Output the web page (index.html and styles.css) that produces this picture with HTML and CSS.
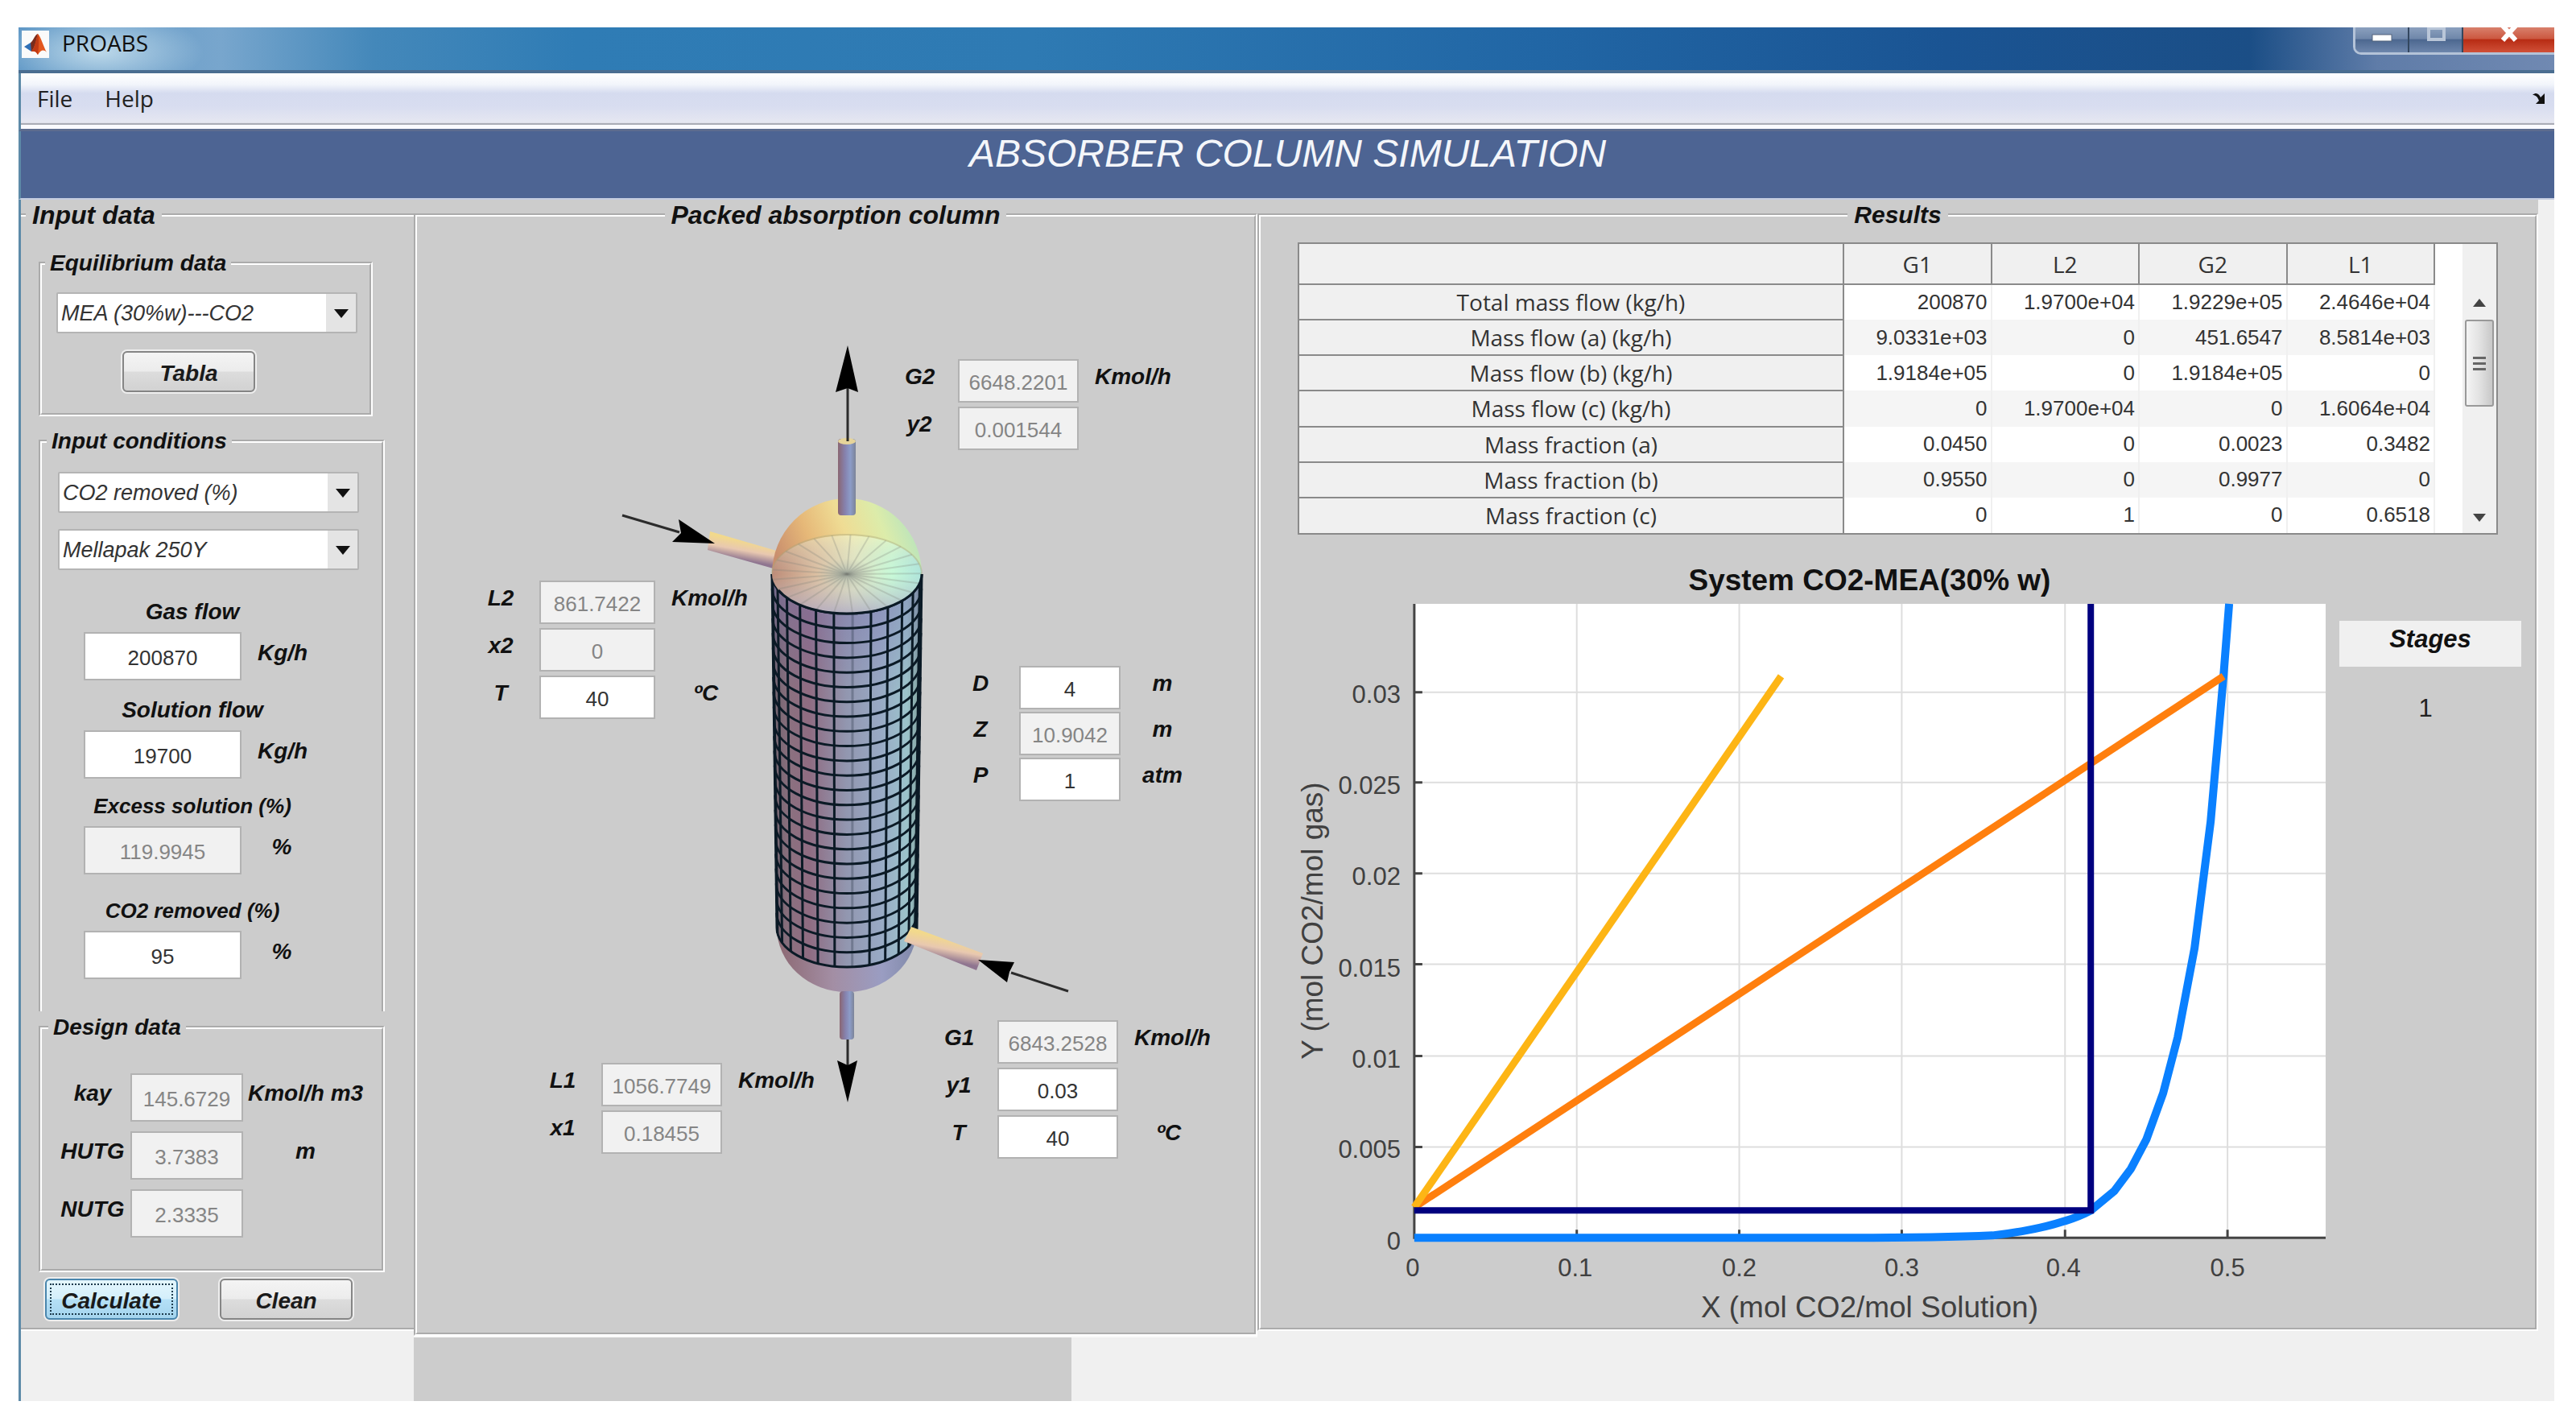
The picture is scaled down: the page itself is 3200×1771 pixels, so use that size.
FILE: index.html
```html
<!DOCTYPE html>
<html lang="en">
<head>
<meta charset="utf-8">
<title>PROABS</title>
<link rel="stylesheet" href="styles.css">
</head>
<body>
<div class="window">
  <header class="titlebar">
    <svg class="app-icon" viewBox="0 0 34 34" aria-hidden="true">
      <rect width="34" height="34" fill="#fafafa"/>
      <path d="M3 20 L11 15 L17 19 L12 26 Z" fill="#2f6fb5"/>
      <path d="M11 15 C14 13 17 4 20 4 L17 19 L12 26 Z" fill="#7a2c1c"/>
      <path d="M20 4 C24 8 27 20 31 27 C27 23 24 24 20 30 C18 26 16 25 12 26 C17 20 18 10 20 4 Z" fill="#e2571e"/>
      <path d="M20 4 C22 12 21 22 20 30 C18 26 16 25 12 26 C17 20 18 10 20 4 Z" fill="#c03a14"/>
    </svg>
    <span class="app-name">PROABS</span>
    <div class="window-buttons">
      <button class="win-btn" aria-label="Minimize"><svg viewBox="0 0 30 34"><rect x="3" y="9" width="24" height="8" fill="#fff" stroke="#55657d"/></svg></button>
      <button class="win-btn" aria-label="Maximize"><svg viewBox="0 0 30 34"><rect x="6" y="1" width="19" height="14" fill="none" stroke="#b9c6d8" stroke-width="4"/></svg></button>
      <button class="win-btn close" aria-label="Close"><svg viewBox="0 0 30 34"><path d="M7 -2 L23 16 M23 -2 L7 16" stroke="#fff" stroke-width="6"/></svg></button>
    </div>
  </header>
  <nav class="menubar">
    <a href="#file">File</a>
    <a href="#help">Help</a>
    <svg class="dock" viewBox="0 0 18 16" aria-hidden="true"><path d="M1 4 C6 0 9 3 11 7 L16 2 V15 H5 L9 11 C7 6 5 4 1 4 Z" fill="#111"/></svg>
  </nav>
  <h1 class="banner">ABSORBER COLUMN SIMULATION</h1>

  <main class="panes">
    <section class="pane pane-input">
      <fieldset class="panel">
        <legend>Input data</legend>

        <fieldset class="group equilibrium">
          <legend>Equilibrium data</legend>
          <span class="dropdown"><select aria-label="Equilibrium system"><option>MEA (30%w)---CO2</option></select></span>
          <button class="btn">Tabla</button>
        </fieldset>

        <fieldset class="group conditions">
          <legend>Input conditions</legend>
          <span class="dropdown"><select aria-label="Specification"><option>CO2 removed (%)</option></select></span>
          <span class="dropdown"><select aria-label="Packing"><option>Mellapak 250Y</option></select></span>
          <div class="fields flows">
            <div class="field"><label for="gas">Gas flow</label><input id="gas" value="200870"><span>Kg/h</span></div>
            <div class="field"><label for="sol">Solution flow</label><input id="sol" value="19700"><span>Kg/h</span></div>
          </div>
          <div class="fields percents">
            <div class="field"><label for="exc">Excess solution (%)</label><input id="exc" value="119.9945" disabled><span>%</span></div>
            <div class="field"><label for="rem">CO2 removed (%)</label><input id="rem" value="95"><span>%</span></div>
          </div>
        </fieldset>

        <fieldset class="group design">
          <legend>Design data</legend>
          <div class="design-grid">
            <label for="kay">kay</label><input id="kay" value="145.6729" disabled><span>Kmol/h m3</span>
            <label for="hutg">HUTG</label><input id="hutg" value="3.7383" disabled><span>m</span>
            <label for="nutg">NUTG</label><input id="nutg" value="2.3335" disabled><span></span>
          </div>
        </fieldset>

        <div class="actions">
          <button class="btn focused">Calculate</button>
          <button class="btn">Clean</button>
        </div>
      </fieldset>
    </section>

    <section class="pane pane-column">
      <fieldset class="panel centered">
        <legend>Packed absorption column</legend>
        <div class="canvas">
          <svg class="column" viewBox="0 0 1040 1371" aria-label="Absorption column">
            <defs>
              <linearGradient id="shell" x1="0" x2="1" y1="0" y2="0">
                <stop offset="0" stop-color="#6d626c"/><stop offset=".12" stop-color="#8b707f"/><stop offset=".25" stop-color="#8f6c82"/>
                <stop offset=".5" stop-color="#9297b0"/><stop offset=".72" stop-color="#98a9c4"/><stop offset=".9" stop-color="#9cc3cb"/><stop offset="1" stop-color="#7f9c98"/>
              </linearGradient>
              <linearGradient id="shellTop" x1="0" x2="0" y1="0" y2="1">
                <stop offset="0" stop-color="#7a72b0" stop-opacity=".5"/><stop offset=".3" stop-color="#7a72b0" stop-opacity="0"/>
              </linearGradient>
              <linearGradient id="dome" x1="0" x2="1" y1=".6" y2=".4">
                <stop offset="0" stop-color="#c98f6e"/><stop offset=".25" stop-color="#e6b878"/><stop offset=".5" stop-color="#efdc94"/>
                <stop offset=".75" stop-color="#dcecaa"/><stop offset="1" stop-color="#b2e2c0"/>
              </linearGradient>
              <linearGradient id="cap" x1="0" x2="1" y1="0" y2="0">
                <stop offset="0" stop-color="#bd8c78"/><stop offset=".3" stop-color="#dcc0a2"/><stop offset=".55" stop-color="#e2e8c4"/>
                <stop offset=".8" stop-color="#c8fad8"/><stop offset="1" stop-color="#aee6dc"/>
              </linearGradient>
              <linearGradient id="capFall" x1="0" x2="0" y1="0" y2="1">
                <stop offset="0" stop-color="#fff4b0" stop-opacity=".45"/><stop offset=".5" stop-color="#c0c0c8" stop-opacity="0"/><stop offset="1" stop-color="#a9a5c6" stop-opacity=".75"/>
              </linearGradient>
              <radialGradient id="capCore">
                <stop offset="0" stop-color="#a4b2aa" stop-opacity=".8"/><stop offset=".4" stop-color="#b4bcb4" stop-opacity="0"/>
              </radialGradient>
              <linearGradient id="base" x1="0" x2="1" y1="0" y2="0">
                <stop offset="0" stop-color="#8c6872"/><stop offset=".4" stop-color="#a38ea4"/><stop offset=".75" stop-color="#9a9dc2"/><stop offset="1" stop-color="#7f88a8"/>
              </linearGradient>
              <linearGradient id="pipe" x1="0" x2="1" y1="0" y2="0">
                <stop offset="0" stop-color="#8a6672"/><stop offset=".4" stop-color="#8682ae"/><stop offset=".7" stop-color="#8c9cc8"/><stop offset="1" stop-color="#7c8498"/>
              </linearGradient>
              <linearGradient id="side" x1=".6" x2=".4" y1=".2" y2=".8">
                <stop offset=".1" stop-color="#f2d98c"/><stop offset=".5" stop-color="#e8c8b0"/><stop offset=".9" stop-color="#8f7590"/>
              </linearGradient>
            </defs>
            <path d="M364 377 L450 402 L446 424 L361 400 Z" fill="url(#side)"/>
            <path d="M447 869 A87 80 0 0 0 621 869 Z" fill="url(#base)"/>
            <path d="M441 430 L447 869 A87 48 0 0 0 621 869 L627 430 Z" fill="url(#shell)"/>
            <path d="M441 430 L447 869 A87 48 0 0 0 621 869 L627 430 Z" fill="url(#shellTop)"/>
            <path d="M441 430 A93 94 0 0 1 627 430 Z" fill="url(#dome)"/>
            <g id="mesh" fill="none" stroke="#0b1a26" stroke-width="3"></g>
            <ellipse cx="534" cy="430" rx="93" ry="48" fill="url(#cap)"/>
            <ellipse cx="534" cy="430" rx="93" ry="48" fill="url(#capFall)"/>
            <ellipse cx="534" cy="430" rx="93" ry="48" fill="url(#capCore)"/>
            <g id="rays" stroke="#7d8078" stroke-opacity=".26" stroke-width="2"></g>
            <path d="M441 430 A93 49 0 0 1 627 430" fill="none" stroke="#a8a47c" stroke-opacity=".4" stroke-width="2"/>
            <path d="M441 430 A93 49 0 0 0 627 430" fill="none" stroke="#0b1a26" stroke-width="3" stroke-dasharray="0 22 222 22"/>
            <rect x="523" y="262" width="22" height="95" rx="4" fill="url(#pipe)"/>
            <ellipse cx="534" cy="265" rx="11" ry="4" fill="#e6d49a"/>
            <rect x="525" y="948" width="18" height="60" rx="4" fill="url(#pipe)"/>
            <path d="M614 868 L703 901 L695 922 L605 886 Z" fill="url(#side)"/>
            <g stroke="#2b2b2b" stroke-width="3">
              <path d="M535 265 V198"/><path d="M255 357 L326 378"/><path d="M809 948 L738 925"/><path d="M535 1008 V1040"/>
            </g>
            <g fill="#000">
              <path d="M535 146 L548 204 L535 199 L520 204 Z"/>
              <path d="M370 392 L325 362 L328 379 L317 390 Z"/>
              <path d="M697 909 L742 912 L736 924 L733 937 Z"/>
              <path d="M535 1086 L522 1034 L535 1040 L547 1034 Z"/>
            </g>
          </svg>

          <div class="stream at-g2">
            <label for="g2">G2</label><input id="g2" value="6648.2201" disabled><span>Kmol/h</span>
            <label for="y2">y2</label><input id="y2" value="0.001544" disabled><span></span>
          </div>
          <div class="stream narrow at-l2">
            <label for="l2">L2</label><input id="l2" value="861.7422" disabled><span>Kmol/h</span>
            <label for="x2">x2</label><input id="x2" value="0" disabled><span></span>
            <label for="t2">T</label><input id="t2" value="40"><span>ºC</span>
          </div>
          <div class="stream sizing at-size">
            <label for="d">D</label><input id="d" value="4"><span>m</span>
            <label for="z">Z</label><input id="z" value="10.9042" disabled><span>m</span>
            <label for="p">P</label><input id="p" value="1"><span>atm</span>
          </div>
          <div class="stream at-g1">
            <label for="g1">G1</label><input id="g1" value="6843.2528" disabled><span>Kmol/h</span>
            <label for="y1">y1</label><input id="y1" value="0.03"><span></span>
            <label for="t1">T</label><input id="t1" value="40"><span>ºC</span>
          </div>
          <div class="stream at-l1">
            <label for="l1">L1</label><input id="l1" value="1056.7749" disabled><span>Kmol/h</span>
            <label for="x1">x1</label><input id="x1" value="0.18455" disabled><span></span>
          </div>
        </div>
      </fieldset>
    </section>

    <section class="pane pane-results">
      <fieldset class="panel centered">
        <legend>Results</legend>
        <div class="table-box">
          <table>
            <thead><tr><th class="name"></th><th>G1</th><th>L2</th><th>G2</th><th>L1</th></tr></thead>
            <tbody>
              <tr><th>Total mass flow (kg/h)</th><td>200870</td><td>1.9700e+04</td><td>1.9229e+05</td><td>2.4646e+04</td></tr>
              <tr><th>Mass flow (a) (kg/h)</th><td>9.0331e+03</td><td>0</td><td>451.6547</td><td>8.5814e+03</td></tr>
              <tr><th>Mass flow (b) (kg/h)</th><td>1.9184e+05</td><td>0</td><td>1.9184e+05</td><td>0</td></tr>
              <tr><th>Mass flow (c) (kg/h)</th><td>0</td><td>1.9700e+04</td><td>0</td><td>1.6064e+04</td></tr>
              <tr><th>Mass fraction (a)</th><td>0.0450</td><td>0</td><td>0.0023</td><td>0.3482</td></tr>
              <tr><th>Mass fraction (b)</th><td>0.9550</td><td>0</td><td>0.9977</td><td>0</td></tr>
              <tr><th>Mass fraction (c)</th><td>0</td><td>1</td><td>0</td><td>0.6518</td></tr>
            </tbody>
          </table>
          <div class="scrollbar" aria-hidden="true">
            <svg class="arrow" viewBox="0 0 16 10"><path d="M0 10 L8 0 L16 10 Z" fill="#444"/></svg>
            <div class="thumb"><i></i><i></i><i></i></div>
            <svg class="arrow" viewBox="0 0 16 10"><path d="M0 0 L8 10 L16 0 Z" fill="#444"/></svg>
          </div>
        </div>

        <div class="plot-row">
          <svg class="plot" viewBox="0 0 1280 960" aria-label="System CO2-MEA(30% w)">
            <rect x="146" y="60" width="1133" height="788" fill="#fff"/>
            <path class="grid" d="M348 60V848 M550 60V848 M752 60V848 M955 60V848 M1157 60V848 M146 170H1279 M146 282H1279 M146 395H1279 M146 508H1279 M146 622H1279 M146 735H1279"/>
            <path class="axis" d="M146 60V848H1279 M348 848V838 M550 848V838 M752 848V838 M955 848V838 M1157 848V838 M146 170H156 M146 282H156 M146 395H156 M146 508H156 M146 622H156 M146 735H156"/>
            <path class="line equilibrium-line" d="M146 848 H689 Q800 848 865 845 Q918 839 955 827 Q972 822 987 814 L1016 790 L1037 762 L1056 726 L1077 668 L1095 599 L1116 488 L1136 331 L1152 150 L1159 60"/>
            <path class="line minimum-line" d="M146 810 L1152 150"/>
            <path class="line operating-line" d="M146 810 L602 150"/>
            <path class="line stage-line" d="M146 814 H987 V60"/>
            <text class="plot-title" x="712" y="43">System CO2-MEA(30% w)</text>
            <g class="ticks-y">
              <text x="129" y="183">0.03</text><text x="129" y="296">0.025</text><text x="129" y="409">0.02</text><text x="129" y="523">0.015</text>
              <text x="129" y="636">0.01</text><text x="129" y="749">0.005</text><text x="129" y="863">0</text>
            </g>
            <g class="ticks-x">
              <text x="144" y="896">0</text><text x="346" y="896">0.1</text><text x="550" y="896">0.2</text><text x="752" y="896">0.3</text>
              <text x="953" y="896">0.4</text><text x="1157" y="896">0.5</text>
            </g>
            <text class="axis-name" x="712" y="947">X (mol CO2/mol Solution)</text>
            <text class="axis-name" transform="translate(32 454) rotate(-90)">Y (mol CO2/mol gas)</text>
          </svg>
          <div class="stages">
            <h2>Stages</h2>
            <output>1</output>
          </div>
        </div>
      </fieldset>
    </section>
  </main>
  <footer class="status"><div class="status-block"></div></footer>
</div>
<script src="column.js"></script>
</body>
</html>
```
FILE: styles.css
```css
* { box-sizing: border-box; }

body {
  margin: 34px 27px 28px 23px;
  background: #fff;
  color: #111;
  font-family: "Liberation Sans", Arial, sans-serif;
}

button, input, select { font-family: inherit; margin: 0; }

/* Title bar */
.titlebar {
  display: flex;
  height: 57px;
  padding-left: 4px;
  border-bottom: 4px solid #4a6d90;
  background:
    radial-gradient(ellipse 130px 50px at 100px 30px, rgba(205, 228, 240, .85), rgba(205, 228, 240, 0)),
    linear-gradient(90deg, #5a94c4 0, #78a6cd 8%, #4488ba 14%, #2f7cb5 22%, #2e7ab3 40%, #2166a5 60%, #1a5493 76%, #1b4e86 88%, #5f7ca8 93%, #7089b2 100%);
}
.app-icon { width: 34px; height: 34px; margin-top: 4px; }
.app-name {
  margin-left: 16px;
  font: 28px/38px "Open Sans", "Noto Sans", sans-serif;
}
.window-buttons {
  display: flex;
  height: 34px;
  margin-left: auto;
  border: 3px solid #b4c3d8;
  border-width: 0 0 3px 3px;
  border-radius: 0 0 0 10px;
  overflow: hidden;
}
.win-btn {
  width: 67px;
  padding: 0;
  border: 0;
  border-right: 2px solid #33475f;
  background: linear-gradient(#8ba0be, #6f87aa 45%, #4d6890 50%, #6d86ac);
}
.win-btn svg { display: block; height: 34px; margin: 0 auto; }
.win-btn.close { width: 113px; border-right: 0; background: linear-gradient(#d8806c, #cc5840 45%, #b82c14 50%, #d05038); }

/* Menu bar and banner */
.menubar {
  display: flex;
  align-items: center;
  gap: 40px;
  height: 72px;
  padding: 0 10px 8px 20px;
  border-left: 3px solid #5d8aa8;
  border-bottom: 3px solid #5d6c8e;
  background: linear-gradient(#fff 0, #f2f5fb 20%, #d5dbef 36%, #d8ddf0 60%, #e6e7f1 89%, #a9abb5 90%, #a9abb5 92%, #fafaff 93%);
  font: 28px/40px "Open Sans", "Noto Sans", sans-serif;
}
.menubar a { color: #222; text-decoration: none; }
.dock { width: 18px; height: 16px; margin-left: auto; }

.banner {
  height: 85px;
  margin: 0;
  border-left: 3px solid #5d8aa8;
  border-bottom: 2px solid #c4cce0;
  background: #4d6493;
  color: #f4f6fa;
  font-size: 48px;
  font-weight: 400;
  font-style: italic;
  line-height: 56px;
  text-align: center;
}

/* Three panes */
.panes, .status {
  display: grid;
  grid-template-columns: 488fr 1048fr 1591fr 20px;
  border-left: 3px solid #5d8aa8;
  background: #f0f0f0;
}
.pane { display: flex; padding-top: 3px; background: #ccc; }
.pane-input, .pane-results { margin-bottom: 8px; }
.pane-column { border-bottom: 2px solid #fafafa; }
.status { height: 79px; }
.status-block { grid-column: 2; width: 78%; background: #ccc; }

fieldset { min-width: 0; margin: 0; padding: 0; border: 4px groove #fff; }
legend, label, .field span, .stream span, .design-grid span, .btn {
  font-size: 28px;
  font-weight: 700;
  font-style: italic;
}
.panel { flex: 1; }
.panel > legend { padding: 0 8px; font-size: 32px; line-height: 32px; }
.pane-input .panel { border-left: 0; border-right: 0; padding-left: 22px; }
.pane-input .panel > legend { margin-left: -16px; }
.centered > legend { margin: 0 auto; }
.pane-results .panel > legend { font-size: 30px; }

/* Input groups */
.group > legend { margin-left: -14px; padding: 0 6px; line-height: 32px; }
.equilibrium { width: 415px; margin-top: 28px; padding: 0 18px 26px; }
.equilibrium .btn { display: block; margin: 22px 0 0 82px; }
.conditions { width: 430px; margin-top: 15px; padding: 0 20px 40px 20px; border-bottom: 0; }
.design { width: 430px; margin-top: 4px; padding: 0 0 39px 22px; }

.dropdown { position: relative; display: block; width: 374px; margin-top: 20px; }
.conditions .dropdown:first-of-type { margin-top: 22px; }
.dropdown::after {
  content: "";
  position: absolute;
  top: 21px;
  right: 11px;
  border: 9px solid transparent;
  border-top: 11px solid #111;
  border-bottom: 0;
  pointer-events: none;
}
select {
  width: 100%;
  height: 51px;
  padding: 0 40px 0 4px;
  border: 2px solid #b4b4b4;
  border-radius: 2px;
  appearance: none;
  background: linear-gradient(#e4e4e4, #e4e4e4) right / 37px 100% no-repeat #fff;
  color: #333;
  font-size: 27px;
  font-style: italic;
}

input {
  width: 100%;
  height: 54px;
  padding: 4px 0 0;
  border: 2px solid #b2b2b2;
  border-radius: 0;
  background: #fff;
  color: #333;
  font-size: 26px;
  text-align: center;
}
input:disabled { background: #f1f1f1; color: #858585; }
label, .field span, .stream span, .design-grid span { text-align: center; white-space: nowrap; }

.fields { display: grid; width: 276px; margin-left: 32px; }
.flows { gap: 20px; margin-top: 35px; }
.percents { gap: 28px; margin-top: 17px; }
.field { display: grid; grid-template-columns: 196px 60px; column-gap: 20px; }
.field label { grid-column: 1 / 3; margin-bottom: 8px; padding-right: 6px; line-height: 34px; }
.percents label { font-size: 26px; }
.field input, .design-grid input { height: 60px; }
.field span { line-height: 52px; }

.design-grid {
  display: grid;
  grid-template-columns: 82px 140px 143px;
  gap: 12px 6px;
  margin-top: 41px;
}
.design-grid label, .design-grid span { line-height: 50px; }

.btn {
  width: 165px;
  height: 51px;
  padding: 4px 0 0;
  border: 2px solid #858585;
  border-radius: 6px;
  background: linear-gradient(#f4f4f4, #ececec 48%, #dcdcdc 52%, #d2d2d2);
  box-shadow: 0 0 0 2px #eee;
  color: #1a1a1a;
}
.btn.focused {
  border-color: #4a86ad;
  outline: 2px dotted #1c3a4c;
  outline-offset: -8px;
  background: linear-gradient(#e4f6fd, #d4effb 48%, #b4e0f6 52%, #a4d4ee);
}
.actions { display: flex; gap: 52px; margin: 8px 0 10px 8px; }

/* Column diagram: streams are pinned round the drawing */
.canvas { position: relative; width: 1040px; height: 1371px; margin: 0 auto; }
.column { display: block; width: 100%; height: 100%; }
.stream {
  position: absolute;
  display: grid;
  grid-template-columns: 36px 150px 96px;
  grid-auto-rows: 54px;
  gap: 5px 20px;
}
.stream label { margin-right: -10px; padding-right: 10px; line-height: 44px; }
.stream input { width: 150px; margin-left: 10px; }
.stream span { margin-left: 10px; line-height: 44px; }
.stream.narrow { grid-template-columns: 36px 144px 96px; }
.narrow input { width: 144px; }
.stream.sizing { grid-template-columns: 36px 126px 74px; row-gap: 3px; }
.sizing input { width: 126px; }
.at-g2 { left: 606px; top: 163px; }
.at-l2 { left: 86px; top: 438px; }
.at-size { left: 682px; top: 544px; }
.at-g1 { left: 655px; top: 984px; }
.at-l1 { left: 163px; top: 1037px; }

/* Results table */
.table-box {
  display: flex;
  justify-content: space-between;
  height: 363px;
  margin: 18px 46px 0;
  border: 2px solid #8a8a8a;
  background: #fff;
}
table { flex: 1; margin-right: 34px; border-collapse: collapse; table-layout: fixed; }
tr { height: 44px; }
th, td { padding: 0; font-weight: 400; }
th {
  border: 2px solid #8a8a8a;
  border-width: 0 2px 2px 0;
  background: #f0f0f0;
  color: #333;
  font: 28px/40px "Open Sans", "Noto Sans", sans-serif;
  text-align: center;
}
thead tr { height: 50px; }
.name { width: 676px; }
td {
  padding-right: 4px;
  border-right: 2px solid #f0f0f0;
  color: #333;
  font-size: 26px;
  text-align: right;
}
tbody tr:nth-child(even) td { background: #f5f5f5; }
tbody tr:last-child th { border-bottom: 0; }
.scrollbar {
  display: flex;
  flex-direction: column;
  align-items: center;
  width: 42px;
  padding: 68px 0 14px;
  background: #f0f0f0;
}
.arrow { width: 16px; height: 10px; }
.thumb {
  display: flex;
  flex-direction: column;
  justify-content: center;
  align-items: center;
  gap: 4px;
  width: 36px;
  height: 108px;
  margin: 16px 0 auto;
  border: 2px solid #999;
  border-radius: 3px;
  background: linear-gradient(90deg, #f4f4f4, #e2e2e2 50%, #c8c8c8);
}
.thumb i { width: 16px; height: 3px; background: #666; }

/* Plot */
.plot-row { display: flex; align-items: flex-start; gap: 16px; margin: 26px 17px 0 45px; }
.plot { flex: 1; min-width: 0; }
.grid { fill: none; stroke: #dedede; stroke-width: 2; }
.axis { fill: none; stroke: #444; stroke-width: 3; }
.line { fill: none; stroke-width: 9; }
.equilibrium-line { stroke: #0a80ff; stroke-width: 10; stroke-linejoin: round; }
.minimum-line { stroke: #ff7f0e; }
.operating-line { stroke: #fdb515; }
.stage-line { stroke: #00007f; stroke-width: 8; }
.plot text { fill: #404040; font-size: 31px; text-anchor: middle; }
.plot .ticks-y text { text-anchor: end; }
.plot .plot-title { fill: #111; font-size: 37px; font-weight: 700; }
.plot .axis-name { font-size: 37px; }

.stages { width: 226px; margin-top: 81px; text-align: center; }
.stages h2 {
  height: 57px;
  margin: 0;
  background: #f0f0f0;
  font-size: 31px;
  font-style: italic;
  line-height: 46px;
}
.stages output { display: block; margin-top: 34px; padding-right: 12px; color: #222; font-size: 31px; line-height: 36px; }
```
FILE: column.js
```js
// Builds the packing mesh and the cap rays of the absorption column.
const NS = "http://www.w3.org/2000/svg";
const CX = 534;
const RINGS = 24;
const SECTOR = 14.4;
const OFFSET = 4.4;

function addPath(parent, d, opacity) {
  const path = document.createElementNS(NS, "path");
  path.setAttribute("d", d);
  if (opacity) path.setAttribute("opacity", opacity);
  parent.appendChild(path);
}

const mesh = document.getElementById("mesh");
for (let i = 0; i <= RINGS; i++) {
  const t = i / RINGS;
  const y = 430 + 439 * t;
  const rx = 93 - 6 * t;
  addPath(mesh, `M${CX - rx} ${y} A${rx} 49 0 0 0 ${CX + rx} ${y}`);
}
for (let k = -6; k <= 5; k++) {
  const a = ((OFFSET + SECTOR * k) * Math.PI) / 180;
  const s = Math.sin(a);
  const c = Math.cos(a);
  addPath(mesh, `M${CX + 93 * s} ${430 + 49 * c} L${CX + 87 * s} ${869 + 49 * c}`, k === 0 ? 0.25 : 1);
}
addPath(mesh, "M441 430 L447 869 M627 430 L621 869");

const rays = document.getElementById("rays");
for (let k = 0; k < 25; k++) {
  const a = ((OFFSET + SECTOR * k) * Math.PI) / 180;
  addPath(rays, `M${CX} 430 L${CX + 93 * Math.sin(a)} ${430 + 49 * Math.cos(a)}`);
}
```
